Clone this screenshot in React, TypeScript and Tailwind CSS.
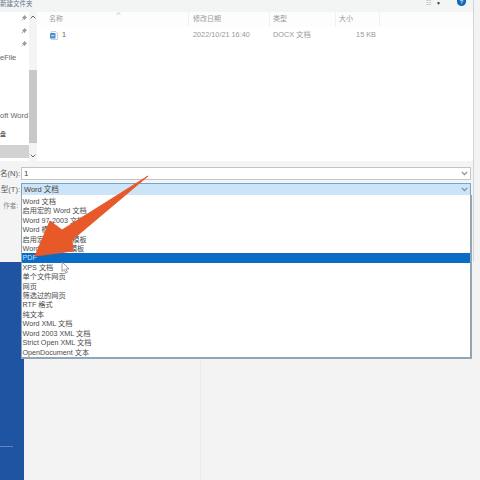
const font = { fontFamily: '"Liberation Sans", "Noto Sans CJK SC", sans-serif' };

const fileTypes = [
  "Word 文档",
  "启用宏的 Word 文档",
  "Word 97-2003 文档",
  "Word 模板",
  "启用宏的 Word 模板",
  "Word 97-2003 模板",
  "PDF",
  "XPS 文档",
  "单个文件网页",
  "网页",
  "筛选过的网页",
  "RTF 格式",
  "纯文本",
  "Word XML 文档",
  "Word 2003 XML 文档",
  "Strict Open XML 文档",
  "OpenDocument 文本",
];

function Chevron() {
  return (
    <svg width="7" height="5" viewBox="0 0 9 6" fill="none" stroke="#7b8794" strokeWidth="1.4">
      <path d="M1 1l3.500 3.500L8 1" />
    </svg>
  );
}

function Pin() {
  return (
    <svg width="6" height="6" viewBox="0 0 7 7" fill="#9a9a9a">
      <path d="M4 0l3 3-1 .5-1.200 1.200L4.500 6 1 2.500l1.300-.3L3.500 1zM1.800 4.400l.8.8L.5 6.800z" />
    </svg>
  );
}

export default function App() {
  return (
    <div style={font} className="relative w-[480px] h-[480px] overflow-hidden bg-[#f3f3f3] text-[#444]">
      {/* Ventana de guardar */}
      <div className="w-[474px] h-[262px] bg-white border-r border-[#d4d4d4]">
        <div className="h-[12px] bg-[#f3f5f5] flex items-start justify-between">
          <span className="text-[6.500px] leading-[7px] text-[#66758a]">新建文件夹</span>
          <div className="flex items-center gap-[5px] pr-[7px]">
            <span className="text-[6px] leading-[6px] text-[#999]">☷</span>
            <span className="text-[5px] leading-[6px] text-[#333]">▼</span>
            <span className="ml-[11px] w-[9px] h-[6px] rounded-b-full bg-[#1667b7] text-white text-[6px] leading-[5px] text-center">?</span>
          </div>
        </div>
        <div className="flex h-[149px]">
          <div className="w-[37px] flex shrink-0">
            <div className="w-[29px] text-[7.500px] leading-[10px] text-[#666]">
              <div className="flex flex-col items-end gap-[7px] pr-[2px] pt-[3px]">
                <Pin />
                <Pin />
                <Pin />
              </div>
              <div className="mt-[6px] whitespace-nowrap">eFile</div>
              <div className="mt-[48px] whitespace-nowrap">oft Word</div>
              <div className="mt-[8px] text-[6px] font-medium text-[#444]">盘</div>
              <div className="mt-[6px] h-[13px] bg-[#d2d2d2]"></div>
            </div>
            <div className="w-[8px] flex flex-col items-center bg-[#f4f4f4]">
              <div className="h-[58px] pt-[3px]">
                <svg width="6" height="4" viewBox="0 0 9 6" fill="none" stroke="#666" strokeWidth="1.500"><path d="M1 5l3.500-3.500L8 5" /></svg>
              </div>
              <div className="w-full h-[73px] bg-[#c8c8c8]"></div>
              <div className="mt-auto pb-[3px]">
                <svg width="6" height="4" viewBox="0 0 9 6" fill="none" stroke="#666" strokeWidth="1.500"><path d="M1 1l3.500 3.500L8 1" /></svg>
              </div>
            </div>
          </div>
          <div className="flex-1 text-[7px] text-[#999]">
            <div className="flex h-[15px] items-center bg-[#fdfdfd]">
              <div className="w-[152px] pl-[12px] h-full flex items-center relative border-r border-[#f1f1f1]">
                名称
                <svg className="absolute left-[79px] top-0" width="5" height="3" viewBox="0 0 9 6" fill="none" stroke="#aaa" strokeWidth="1.500"><path d="M1 5l3.500-3.500L8 5" /></svg>
              </div>
              <div className="w-[81px] pl-[4px] h-full flex items-center border-r border-[#f1f1f1]">修改日期</div>
              <div className="w-[66px] pl-[3px] h-full flex items-center border-r border-[#f1f1f1]">类型</div>
              <div className="w-[44px] pl-[3px] h-full flex items-center border-r border-[#f1f1f1]">大小</div>
            </div>
            <div className="flex h-[14px] items-center mt-[1px] text-[7.300px]">
              <div className="w-[152px] pl-[13px] flex items-center gap-[4px] text-[#666]">
                <svg width="8" height="9" viewBox="0 0 8 9">
                  <path d="M1.500.5H6l1.500 1.500v6.500h-6z" fill="#fff" stroke="#a8b4c4" strokeWidth=".6" />
                  <rect x="0" y="2" width="5.500" height="5.500" rx=".6" fill="#4d8fd0" />
                  <path d="M1.200 4.700h3" stroke="#fff" strokeWidth=".8" />
                </svg>
                1
              </div>
              <div className="w-[81px] pl-[4px] whitespace-nowrap">2022/10/21 16:40</div>
              <div className="w-[66px] pl-[3px] whitespace-nowrap">DOCX 文档</div>
              <div className="w-[44px] pr-[4px] text-right whitespace-nowrap">15 KB</div>
            </div>
          </div>
        </div>
        {/* Campos del formulario */}
        <div className="h-[101px] bg-[#f4f4f4] pt-[6px] text-[7.500px] text-[#555]">
          <div className="flex items-center h-[13px]">
            <span className="w-[20px] text-right whitespace-nowrap">名(N):</span>
            <div className="ml-[1px] w-[450px] h-[13px] bg-white border border-[#c4c4c4] flex items-center justify-between pl-[2px] pr-[2px] text-[#444] text-[8px]">
              1
              <Chevron />
            </div>
          </div>
          <div className="flex items-center h-[13px] mt-[3px]">
            <span className="w-[20px] text-right whitespace-nowrap">型(T):</span>
            <div className="ml-[1px] w-[450px] h-[13px] bg-[#cce4f7] border border-[#6fa6d4] flex items-center justify-between pl-[2px] pr-[2px] text-[#444] text-[7.500px]">
              Word 文档
              <Chevron />
            </div>
          </div>
          <div className="w-[18px] mt-[5px] text-right whitespace-nowrap text-[6.500px] text-[#888]">作者:</div>
        </div>
      </div>

      {/* Fondo inferior */}
      <div className="absolute left-0 top-[262px] bottom-0 w-[24px] bg-[#1f54a3]">
        <div className="mt-[184px] w-[13px] h-px bg-[#5f86c2]"></div>
      </div>
      <div className="absolute left-[200px] top-[360px] bottom-0 w-px bg-[#ececec]"></div>

      {/* Lista desplegable */}
      <div className="absolute left-[21px] top-[195px] w-[451px] h-[164px] bg-white border-r-2 border-b-2 border-l border-[#8fa6b8] pt-[2px] text-[7.200px] leading-[9.400px] text-[#4a4a4a]">
        {fileTypes.map((t) => (
          <div key={t} className={t === "PDF" ? "pl-[0.5px] bg-[#0a6cc4] text-[#cfe3f5]" : "pl-[0.5px]"}>
            {t}
          </div>
        ))}
      </div>

      {/* Cursor */}
      <svg className="absolute left-[61px] top-[261px]" width="9" height="13" viewBox="0 0 9 13">
        <path d="M1 1v9.500l2.300-2 1.500 3.500 1.600-.7-1.500-3.400H8z" fill="#fff" stroke="#888" strokeWidth=".8" />
      </svg>

      {/* Flecha naranja */}
      <svg className="absolute left-0 top-0" width="480" height="480" viewBox="0 0 480 480">
        <path d="M148 176 L62 230 L50 221 L35 256 L73 251 L72 240 Z" fill="#e8592a" stroke="#e8592a" strokeWidth="1" strokeLinejoin="round" />
      </svg>
    </div>
  );
}
